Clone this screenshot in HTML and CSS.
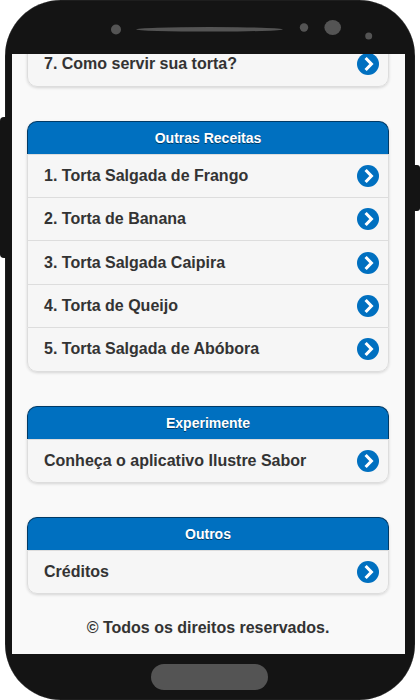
FILE: index.html
```
<!DOCTYPE html>
<html lang="pt-br">
<head>
  <meta charset="UTF-8">
  <title>Torta Salgada</title>
  <link rel="stylesheet" href="styles.css">
</head>
<body>

  <svg class="icon-defs" width="0" height="0">
    <symbol id="arrow" viewBox="0 0 22 22">
      <circle cx="11" cy="11" r="11" fill="#0070c0"/>
      <path d="M8.6 5 L14.4 11 L8.6 17" fill="none" stroke="#fff" stroke-width="3.1"/>
    </symbol>
  </svg>

  <div class="device">
    <span class="side-button left"></span>
    <span class="side-button right"></span>

    <div class="phone">
      <svg class="phone-top" width="410" height="54" viewBox="5 0 410 54" fill="#545454">
        <circle cx="116" cy="29.5" r="5"/>
        <ellipse cx="209.500" cy="29.300" rx="73.500" ry="2.300"/>
        <circle cx="304" cy="27.500" r="4.200"/>
        <ellipse cx="332.700" cy="27.500" rx="8.300" ry="7.500"/>
        <circle cx="368.700" cy="36" r="3.500"/>
      </svg>

      <div class="screen">
        <ul class="list cut">
          <li><a class="item">7. Como servir sua torta?<svg class="arrow"><use href="#arrow"/></svg></a></li>
        </ul>

        <ul class="list">
          <li class="divider">Outras Receitas</li>
          <li><a class="item">1. Torta Salgada de Frango<svg class="arrow"><use href="#arrow"/></svg></a></li>
          <li><a class="item">2. Torta de Banana<svg class="arrow"><use href="#arrow"/></svg></a></li>
          <li><a class="item">3. Torta Salgada Caipira<svg class="arrow"><use href="#arrow"/></svg></a></li>
          <li><a class="item">4. Torta de Queijo<svg class="arrow"><use href="#arrow"/></svg></a></li>
          <li><a class="item">5. Torta Salgada de Abóbora<svg class="arrow"><use href="#arrow"/></svg></a></li>
        </ul>

        <ul class="list">
          <li class="divider">Experimente</li>
          <li><a class="item">Conheça o aplicativo Ilustre Sabor<svg class="arrow"><use href="#arrow"/></svg></a></li>
        </ul>

        <ul class="list">
          <li class="divider">Outros</li>
          <li><a class="item">Créditos<svg class="arrow"><use href="#arrow"/></svg></a></li>
        </ul>

        <h4 class="footer">© Todos os direitos reservados.</h4>
      </div>

      <div class="phone-bottom">
        <span class="home"></span>
      </div>
    </div>
  </div>

</body>
</html>
```

FILE: styles.css
```
* {
  box-sizing: border-box;
}

body {
  margin: 0;
  background-color: #ffffff;
  color: #333333;
  font-family: Arial, "Liberation Sans", sans-serif;
  font-size: 16px;
  overflow: hidden;
}

.icon-defs {
  position: absolute;
}

.device {
  position: relative;
  width: 420px;
  height: 700px;
  padding: 0 5px;
}

.side-button {
  position: absolute;
  z-index: 1;
  background-color: #141414;
}

.side-button.left {
  left: 0;
  top: 117px;
  width: 8px;
  height: 141px;
  border-radius: 4px 0 0 4px;
}

.side-button.right {
  right: 0;
  top: 165px;
  width: 8px;
  height: 46px;
  border-radius: 0 3px 3px 0;
}

.phone {
  position: relative;
  height: 700px;
  background-color: #141414;
  border-radius: 56px;
  box-shadow: inset 0 0 1px #777777;
}

.phone-top {
  display: block;
}

.screen {
  width: 393px;
  height: 600px;
  margin-left: 7px;
  padding: 0 16px 0 15px;
  background-color: #f9f9f9;
  overflow: hidden;
  text-shadow: 0 1px 0 #f3f3f3;
}

.list {
  list-style: none;
  margin: 0 0 34px;
  padding: 0;
  border-radius: 10px;
  box-shadow: 0 1px 3px rgba(0, 0, 0, 0.15);
}

.list.cut {
  margin-top: -12px;
  margin-bottom: 33.2px;
}

.divider {
  height: 33px;
  border: 1px solid #003a66;
  border-bottom: 0;
  border-radius: 10px 10px 0 0;
  background-color: #0070c0;
  color: #ffffff;
  font-size: 14px;
  font-weight: bold;
  line-height: 33px;
  text-align: center;
  text-shadow: 0 1px 0 #003a66;
}

.item {
  display: flex;
  align-items: center;
  justify-content: space-between;
  height: 43.4px;
  padding: 0 9px 0 16px;
  border: 1px solid #dddddd;
  border-bottom: 0;
  background-color: #f6f6f6;
  font-weight: bold;
}

.list li:last-child .item {
  height: 44.4px;
  border-bottom: 1px solid #dddddd;
  border-radius: 0 0 10px 10px;
}

.list.cut li:last-child .item {
  height: 45.4px;
  padding-bottom: 1px;
}

.arrow {
  width: 22px;
  height: 22px;
}

.footer {
  margin: -10.4px 0 0;
  font-size: 16px;
  line-height: 20px;
  text-align: center;
}

.phone-bottom {
  display: flex;
  justify-content: center;
  padding: 10px 1px 0 0;
}

.home {
  width: 117px;
  height: 26px;
  border-radius: 13px;
  background-color: #545454;
}
```
